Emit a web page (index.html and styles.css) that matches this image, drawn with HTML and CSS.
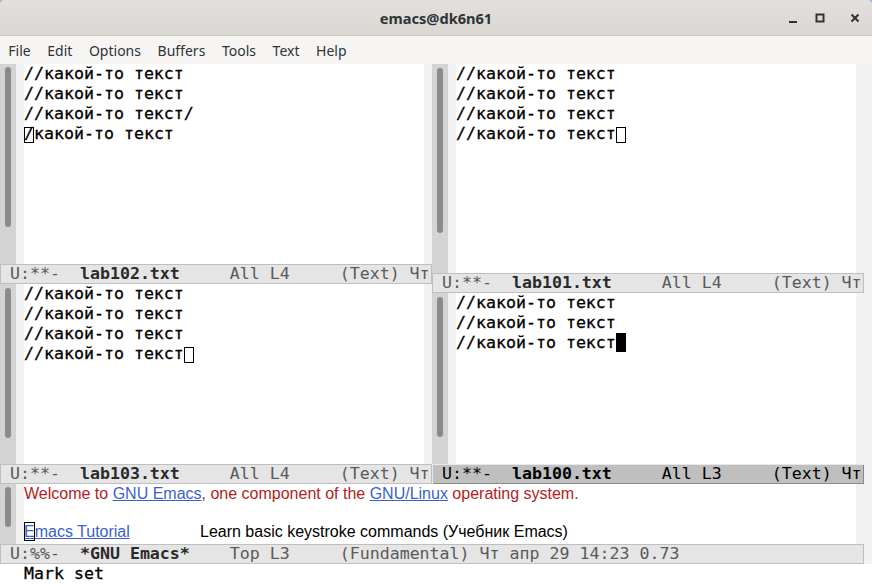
FILE: index.html
```html
<!DOCTYPE html>
<html lang="ru">
<head>
<meta charset="utf-8">
<title>emacs@dk6n61</title>
<link rel="stylesheet" href="styles.css">
</head>
<body>
<div class="frame">
  <header class="titlebar">
    <div class="tb-side"></div>
    <span class="title">emacs@dk6n61</span>
    <div class="tb-side tb-btns">
      <svg class="wb wb-min" width="16" height="16" viewBox="0 0 16 16"><rect x="4" y="11" width="8" height="2" fill="#2e3436"/></svg>
      <svg class="wb wb-max" width="16" height="16" viewBox="0 0 16 16"><rect x="4.5" y="4.5" width="7" height="7" fill="none" stroke="#2e3436" stroke-width="2"/></svg>
      <svg class="wb wb-close" width="16" height="16" viewBox="0 0 16 16"><path d="M4.5 4.5l7 7M11.5 4.5l-7 7" stroke="#2e3436" stroke-width="2" fill="none"/></svg>
    </div>
  </header>
  <nav class="menubar">
    <span class="mi">File</span><span class="mi">Edit</span><span class="mi">Options</span><span class="mi">Buffers</span><span class="mi">Tools</span><span class="mi">Text</span><span class="mi">Help</span>
  </nav>
  <div class="upper">
    <div class="main">
      <div class="cols">
        <div class="col">
          <div class="body h200">
            <div class="sb"><div class="thumb" style="margin-top:3px;height:160px"></div></div>
            <div class="fr"></div>
            <div class="txt"><div class="ln">//какой-то текст</div><div class="ln">//какой-то текст</div><div class="ln">//какой-то текст/</div><div class="ln"><span class="cur">/</span>какой-то текст</div></div>
            <div class="fr"></div>
          </div>
          <div class="ml"> U:**-  <b>lab102.txt</b>     All L4     (Text) Чт</div>
          <div class="body h180">
            <div class="sb"><div class="thumb" style="margin-top:4px;height:150px"></div></div>
            <div class="fr"></div>
            <div class="txt"><div class="ln">//какой-то текст</div><div class="ln">//какой-то текст</div><div class="ln">//какой-то текст</div><div class="ln">//какой-то текст<span class="cur"> </span></div></div>
            <div class="fr"></div>
          </div>
          <div class="ml"> U:**-  <b>lab103.txt</b>     All L4     (Text) Чт</div>
        </div>
        <div class="col">
          <div class="body h209">
            <div class="sb"><div class="thumb" style="margin-top:4px;height:165px"></div></div>
            <div class="fr"></div>
            <div class="txt"><div class="ln">//какой-то текст</div><div class="ln">//какой-то текст</div><div class="ln">//какой-то текст</div><div class="ln">//какой-то текст<span class="cur"> </span></div></div>
            <div class="fr"></div>
          </div>
          <div class="ml"> U:**-  <b>lab101.txt</b>     All L4     (Text) Чт</div>
          <div class="body h171">
            <div class="sb"><div class="thumb" style="margin-top:4px;height:140px"></div></div>
            <div class="fr"></div>
            <div class="txt"><div class="ln">//какой-то текст</div><div class="ln">//какой-то текст</div><div class="ln">//какой-то текст<span class="pt"> </span></div></div>
            <div class="fr"></div>
          </div>
          <div class="ml active"> U:**-  <b>lab100.txt</b>     All L3     (Text) Чт</div>
        </div>
      </div>
      <div class="body h60">
        <div class="sb"><div class="thumb" style="margin-top:3px;height:40px"></div></div>
        <div class="fr"></div>
        <div class="txt prop">
          <div class="pl"><span class="cm">Welcome to </span><a class="lk">GNU Emacs</a><span class="cm">, one component of the </span><a class="lk">GNU/Linux</a><span class="cm"> operating system.</span></div>
          <div class="pl"></div>
          <div class="pl tut"><a class="lk tl"><span class="cur">E</span>macs Tutorial</a><span>Learn basic keystroke commands (Учебник Emacs)</span></div>
        </div>
        <div class="fr"></div>
      </div>
      <div class="ml"> U:%%-  <b>*GNU Emacs*</b>    Top L3     (Fundamental) Чт апр 29 14:23 0.73</div>
    </div>
    <div class="strip"></div>
  </div>
  <div class="echo">Mark set</div>
</div>
</body>
</html>
```
FILE: styles.css
```css
html, body {
  margin: 0;
  padding: 0;
}
body {
  background: #9fb4cc;
  width: 872px;
  height: 584px;
  overflow: hidden;
}
.frame {
  width: 872px;
  height: 584px;
  display: flex;
  flex-direction: column;
  background: #fff;
  border-radius: 5px 5px 0 0;
  overflow: hidden;
}
.titlebar {
  flex: none;
  height: 36px;
  box-sizing: border-box;
  background: linear-gradient(#e2dfdc, #dbd8d4);
  border-bottom: 1px solid #cdc9c5;
  display: grid;
  grid-template-columns: 1fr auto 1fr;
  align-items: center;
}
.title {
  font: 700 14.6px "Noto Sans", sans-serif;
  color: #2e3436;
  padding-top: 1px;
}
.tb-btns {
  display: flex;
  justify-content: flex-end;
  align-items: center;
  padding-right: 9px;
}
.wb { display: block; }
.wb-max { margin-left: 11px; }
.wb-close { margin-left: 19px; }
.menubar {
  flex: none;
  height: 28px;
  background: #f6f5f4;
  display: flex;
  align-items: center;
  font: 14px "Noto Sans", sans-serif;
  color: #2e3436;
  padding-top: 1px;
  box-sizing: border-box;
}
.mi { padding: 0 8.3px; }
.upper {
  flex: none;
  display: flex;
}
.main {
  width: 864px;
  display: flex;
  flex-direction: column;
}
.strip {
  width: 8px;
  background: #f2f2f2;
}
.cols { display: flex; }
.col {
  width: 432px;
  display: flex;
  flex-direction: column;
}
.body { display: flex; overflow: hidden; }
.h200 { height: 200px; }
.h180 { height: 180px; }
.h209 { height: 209px; }
.h171 { height: 171px; }
.h60 { height: 60px; }
.sb {
  width: 16px;
  flex: none;
  background: #d4d4d4;
  display: flex;
  flex-direction: column;
  align-items: center;
}
.thumb {
  width: 6px;
  border-radius: 3px;
  background: #898c8c;
}
.fr {
  width: 8px;
  flex: none;
  background: #f2f2f2;
}
.txt {
  flex: 1;
  min-width: 0;
  background: #fff;
  font: 16.6px "DejaVu Sans Mono", monospace;
  line-height: 20px;
  color: #000;
  white-space: pre;
  overflow: hidden;
  -webkit-text-stroke: 0.3px #000;
}
.ln { height: 20px; }
.cur { position: relative; }
.cur::after {
  content: "";
  position: absolute;
  left: 0;
  right: 0;
  bottom: 0;
  height: 16px;
  box-sizing: border-box;
  border: 1px solid #000;
}
.pt { background: #000; }
.ml {
  height: 20px;
  flex: none;
  line-height: 20px;
  background: #e5e5e5;
  box-shadow: inset 0 0 0 1px #bfbfbf;
  color: #5a5a5a;
  font: 16.6px "DejaVu Sans Mono", monospace;
  white-space: pre;
  overflow: hidden;
}
.ml b { color: #2a2a2a; }
.ml.active {
  background: #bfbfbf;
  color: #000;
  box-shadow: inset 1px 1px 0 #e8e8e8, inset -1px -1px 0 #8a8a8a;
}
.ml.active b { color: #000; }
.prop {
  font: 16px "Liberation Sans", Arial, sans-serif;
  line-height: 19px;
  white-space: normal;
  -webkit-text-stroke: 0;
}
.pl { height: 19px; white-space: pre; }
.cm { color: #b22222; }
.lk {
  color: #3a5fcd;
  text-decoration: underline;
}
.tut { display: flex; }
.tl { width: 176px; flex: none; }
.tl .cur::after {
  height: 19px;
  bottom: -1px;
}
.echo {
  flex: 1;
  background: #fff;
  padding-left: 24px;
  font: 16.6px "DejaVu Sans Mono", monospace;
  line-height: 20px;
  color: #000;
  white-space: pre;
  -webkit-text-stroke: 0.3px #000;
}
```
